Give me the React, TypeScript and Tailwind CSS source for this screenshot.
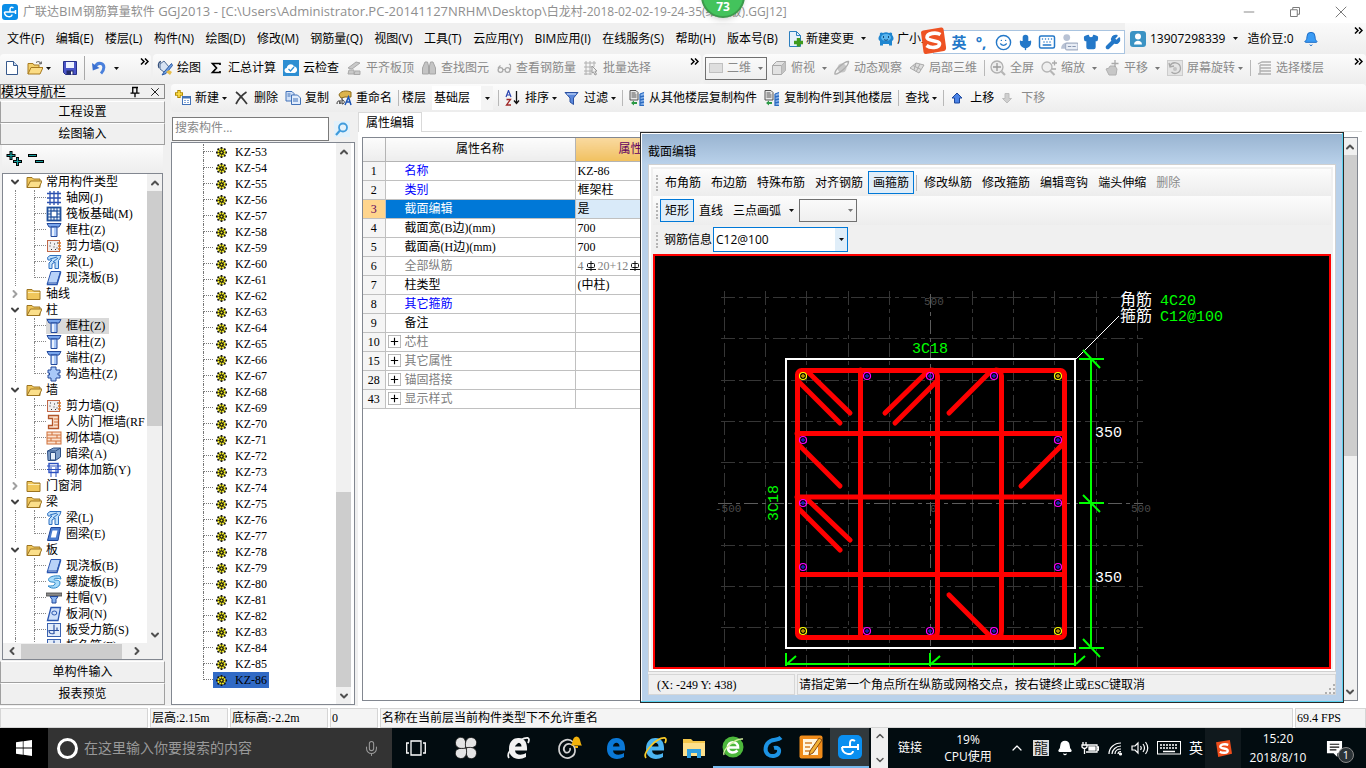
import type { ReactNode } from "react";
import { Bell, Keyboard, Mic, Shirt, Smile, Wrench, ChevronDown, ChevronUp, ChevronLeft, ChevronRight } from "lucide-react";

const UI = "font-['Open_Sans','Noto_Sans_CJK_SC',sans-serif]";
const SONG = "font-['Liberation_Serif','Noto_Sans_CJK_SC',serif]";
const BAR = "bg-linear-to-b from-[#fcfcfc] to-[#ededed]";

interface SvgProps {
  children: ReactNode;
  size?: string;
}

function Svg({ children, size = "size-4" }: SvgProps) {
  return (
    <svg viewBox="0 0 16 16" className={`${size} shrink-0`} fill="none" aria-hidden="true">
      {children}
    </svg>
  );
}

function Caret({ muted = false }: { muted?: boolean }) {
  return (
    <svg viewBox="0 0 5 3" className="h-[3px] w-[5px] shrink-0" aria-hidden="true">
      <path d="M0 0h5L2.5 3z" fill={muted ? "#777" : "#111"} />
    </svg>
  );
}

function More() {
  return (
    <svg viewBox="0 0 9 7" className="mt-1 h-[7px] w-[9px] shrink-0 self-start" fill="none" stroke="#000" strokeWidth="1.5" aria-hidden="true">
      <path d="M1 .5l3 3-3 3M5 .5l3 3-3 3" />
    </svg>
  );
}

function Divider() {
  return <span className="h-4 w-px shrink-0 bg-[#b8b8b8]" />;
}

/* ---------- toolbar icons ---------- */

const icons = {
  logo: (
    <Svg>
      <rect width="16" height="16" rx="3" fill="#0b8ee8" />
      <path d="M11.500 3.800C9.500 2.600 8 3.200 8 5.500V8M2.500 8h11M13.500 6v4M2.500 8c0 5.500 7.500 6 7.500 2.500" stroke="#fff" strokeWidth="1.500" />
    </Svg>
  ),
  file: (
    <Svg>
      <path d="M2.500 1.500h7l4 4v9h-11z" fill="#fff" stroke="#37598c" />
      <path d="M9.500 1.500v4h4" fill="#c9daf2" stroke="#37598c" />
    </Svg>
  ),
  open: (
    <Svg>
      <path d="M1 14V3.500h5l1 1.500h5V8" fill="#f2cf6b" stroke="#a87a1f" />
      <path d="M1 14l3-6.500h12L13 14z" fill="#fbdc84" stroke="#a87a1f" />
      <path d="M9 2.500c2-1.500 4-1 5 1m.3-2v2.300H12" stroke="#444" strokeWidth=".9" />
    </Svg>
  ),
  save: (
    <Svg>
      <path d="M1.500 1.500h13v13h-11l-2-2z" fill="#4a55c8" stroke="#27308a" />
      <path d="M4 2h8v6H4z" fill="#eef2ff" />
      <path d="M4.500 10.500h7v4h-7z" fill="#222b66" />
      <path d="M9 11.500h1.500v3H9z" fill="#fff" />
    </Svg>
  ),
  undo: (
    <Svg>
      <path d="M4 7.500c1-3 3.500-4.500 6-4 4 1 3.600 6.500 0 10" stroke="#4a80dc" strokeWidth="3" />
      <path d="M1 3l.8 7.500L8.500 8z" fill="#3a6fd0" />
    </Svg>
  ),
  paint: (
    <Svg>
      <path d="M3 4l4-3 5 6-5 5-4-3z" fill="#d7e3f3" stroke="#4d6a94" />
      <path d="M4 1.500C1 2 1 6 2 8" stroke="#35517d" strokeWidth="1.300" />
      <path d="M14.500 3.500L7 12l-2 3 4-1.500 6.500-8z" fill="#6f9fe0" stroke="#2d5ca8" />
      <path d="M9 12l4 3 2-3-3-2z" fill="#e8bd4a" />
    </Svg>
  ),
  sum: (
    <Svg>
      <path d="M12 5V3.500H4.500L8.500 8l-4 4.500H12V11" stroke="#000" strokeWidth="1.700" />
    </Svg>
  ),
  cloud: (
    <Svg>
      <rect width="16" height="16" fill="#2d8ed2" />
      <path d="M4 13c-3.500-.5-3-4.800-.3-5C4.200 4 9.500 2.500 11 6.500c4 .2 4 6 .5 6.500z" fill="#fff" />
      <path d="M5.500 9l2 2 3.500-4" stroke="#2d8ed2" strokeWidth="1.300" />
    </Svg>
  ),
  align: (
    <Svg>
      <path d="M2 8l8-6 4 1-8 6zM3 10h5v4H2zM9 11h5v3.500H8z" fill="#c9c9c9" stroke="#a9a9a9" />
    </Svg>
  ),
  binoculars: (
    <Svg>
      <path d="M4 2h2.500l1 4v8H1.500V8zM9.500 2H12l2.500 6v6H8.500V6z" fill="#c4c4c4" stroke="#a5a5a5" />
    </Svg>
  ),
  glasses: (
    <Svg>
      <path d="M4.500 5.500L2 8m11-4l1.500 1v5M7 9.500h2" stroke="#aaa" strokeWidth="1.200" />
      <circle cx="4.500" cy="10" r="2.400" stroke="#aaa" strokeWidth="1.300" />
      <circle cx="11.500" cy="10" r="2.400" stroke="#aaa" strokeWidth="1.300" />
    </Svg>
  ),
  batch: (
    <Svg>
      <path d="M1 3h12M1 7h8M1 11h8M1 14h8M3 1v14M7 1v14M11 1v6" stroke="#b0b0b0" />
      <path d="M9 6l5 5-2 .3 1.500 3-1.500.7-1.500-3L9 13z" fill="#eee" stroke="#999" />
    </Svg>
  ),
  plane: (
    <Svg>
      <rect x="1.500" y="3.500" width="13" height="9" fill="#dedede" stroke="#c0c0c0" />
    </Svg>
  ),
  cube: (
    <Svg>
      <path d="M1.500 5.500l4-4h9v9l-4 4h-9z" fill="#e2e2e2" stroke="#a8a8a8" />
      <path d="M1.500 5.500h9v9m0-9l4-4" stroke="#a8a8a8" />
      <path d="M10.500 5.500l4-4v9l-4 4z" fill="#c4c4c4" />
    </Svg>
  ),
  orbit: (
    <Svg>
      <circle cx="8" cy="8" r="4.500" fill="#c7c7c7" />
      <path d="M1 14c3 1 14-8 13.500-12.500C11 1 0 10 1 14z" stroke="#adadad" strokeWidth="1.400" />
    </Svg>
  ),
  local3d: (
    <Svg>
      <path d="M1 8l6-5 8 2-5 8z" fill="#ddd" stroke="#aaa" />
      <path d="M4 5.500l8 4M7 3l-2 7M11 4l-4 8" stroke="#aaa" />
    </Svg>
  ),
  full: (
    <Svg>
      <circle cx="7" cy="7" r="6" fill="#ededed" stroke="#b0b0b0" strokeWidth="1.300" />
      <path d="M3 7h8M7 3v8" stroke="#999" strokeWidth="1.300" />
      <path d="M11.500 11.500l3.500 3.500" stroke="#b5b5b5" strokeWidth="2.200" />
    </Svg>
  ),
  zoom: (
    <Svg>
      <circle cx="6" cy="7" r="5" fill="#efefef" stroke="#b5b5b5" strokeWidth="1.300" />
      <path d="M9.500 11l4 4" stroke="#b5b5b5" strokeWidth="2.200" />
      <path d="M11 3h5M13.500.5v5M11 9h4" stroke="#aaa" strokeWidth="1.300" />
    </Svg>
  ),
  pan: (
    <Svg>
      <path d="M2 9l3-1 1-2h5l2 3-1 6H5z" fill="#c7c7c7" stroke="#b0b0b0" />
      <path d="M11 0v7M7.500 3.500h7" stroke="#aaa" strokeWidth="1.300" />
    </Svg>
  ),
  rotate: (
    <Svg>
      <rect x=".5" y=".5" width="15" height="15" fill="#e4e4e4" stroke="#ccc" />
      <path d="M3 6c2-5 10-4 10.500 2 0 5-6 7-9 4M2 3l1 4 4-1" stroke="#a8a8a8" strokeWidth="1.300" />
      <circle cx="8" cy="9" r="2" fill="#c2c2c2" />
    </Svg>
  ),
  floors: (
    <Svg>
      <path d="M2 4l4-2h9M4 5h11M4 8h11M4 11h11M2 14h13M4 5v9" stroke="#b0b0b0" strokeWidth="1.300" />
    </Svg>
  ),
  create: (
    <Svg>
      <path d="M4 0v8M0 4h8" stroke="#b38a00" strokeWidth="3.400" />
      <path d="M4 1v6M1 4h6" stroke="#ffe04a" strokeWidth="1.600" />
      <rect x="7.500" y="6.500" width="8" height="8" fill="#fff" stroke="#4272b8" />
      <path d="M7.500 7.500h8" stroke="#4272b8" strokeWidth="2" />
      <path d="M9 10.500h2m1 0h2m-5 2h2m1 0h2" stroke="#86a8d8" />
    </Svg>
  ),
  remove: (
    <Svg>
      <path d="M2 2c4 3 8 8 11 12M12.500 2C8 5 4 10 2 14" stroke="#3a3a3a" strokeWidth="1.700" />
    </Svg>
  ),
  copy: (
    <Svg>
      <path d="M1 1.500h6l2 2V11H1z" fill="#cfe0f8" stroke="#4272b8" />
      <path d="M6.500 5h6l3 3v6.500h-9z" fill="#e2edfc" stroke="#4272b8" />
      <path d="M8 9h5m-5 2h5M2.500 4h3m-3 2h3" stroke="#4272b8" />
    </Svg>
  ),
  rename: (
    <Svg>
      <path d="M3 5c1-4 7-5 12-3v5H9L5 8z" fill="#dcb44c" stroke="#8a6a1a" />
      <path d="M1 14c0-4 3-4 3 0m0-4v4M6 8v6c3 0 3-4 0-4" stroke="#333" />
      <path d="M9 15l3.500-8L15 15m-5-3h4.500" stroke="#1f56b5" strokeWidth="1.500" />
    </Svg>
  ),
  filter: (
    <Svg>
      <path d="M1 2.500h13L9.500 8v6.500L6 12V8z" fill="#5b88dc" stroke="#2b50a0" />
      <path d="M3 4h9" stroke="#d8e5fb" />
    </Svg>
  ),
  sort: (
    <Svg>
      <path d="M1 7l2.500-6.500L6 7M2 5h3" stroke="#2b45b0" strokeWidth="1.200" />
      <path d="M1.500 9.500h4L1.500 15h4.500" stroke="#a02828" strokeWidth="1.300" />
      <path d="M11.500 1v12M9 10.500l2.500 3 2.500-3" stroke="#111" strokeWidth="1.300" />
    </Svg>
  ),
  copyFloor: (
    <Svg>
      <path d="M1 .5h6l2 2V10H1z" fill="#e8e8e8" stroke="#555" />
      <path d="M2.500 3h4m-4 2h5m-5 2h5" stroke="#555" />
      <path d="M11 4l4-1.500v12L11 16z" fill="#8fb8ee" />
      <path d="M11 4l4-1.500M11 7l4-1M11 10l4-1M11 13l4-1M11 15.500h4M11 4v12" stroke="#2d6cc0" strokeWidth="1.300" />
      <path d="M2 13l3-2.500V12h3v2H5v1.500z" fill="#2c9a45" />
    </Svg>
  ),
  up: (
    <Svg>
      <path d="M7 3l5 5H9.500v5h-5V8H2z" fill="#4b83e6" stroke="#1c479c" />
    </Svg>
  ),
  down: (
    <Svg>
      <path d="M6 13L1.500 8.500H4v-5h4v5h2.500z" fill="#cfcfcf" stroke="#bdbdbd" />
    </Svg>
  ),
  change: (
    <Svg>
      <path d="M2.500.5h7l4 4v11h-11z" fill="#e6f1fb" stroke="#2c7fbf" />
      <path d="M9.500.5v4h4" stroke="#2c7fbf" />
      <path d="M11.500 7v8.500M7 11.500h9" stroke="#3f9b1e" strokeWidth="3.400" />
    </Svg>
  ),
  mascot: (
    <Svg>
      <path d="M2 4c-1-3 2-3 3-2 2-1 4-1 6 0 1-1 4-1 3 2 2 2 2 5 0 6v4.500h-3V13H5v1.500H2V10C0 9 0 6 2 4z" fill="#1f86d0" />
      <ellipse cx="8" cy="6.500" rx="5" ry="3.500" fill="#5cb6ee" />
      <path d="M5.500 5v2M10.500 5v2M6 8.500c1 1 3 1 4 0" stroke="#124a7c" />
    </Svg>
  ),
  user: (
    <Svg>
      <rect width="16" height="16" rx="3" fill="#3b93c4" />
      <path d="M4 13.500c0-5 8-5 8 0z" fill="#fff" />
      <circle cx="8" cy="5.500" r="3" fill="#fff" />
    </Svg>
  ),
};

/* ---------- tree icons ---------- */

const treeIcons: Record<string, ReactNode> = {
  axis: (
    <Svg>
      <path d="M1 3.500h14M1 8h14M1 12.500h14M4 1v14M8 1v14M12 1v14" stroke="#2b50b0" strokeWidth="1.300" />
    </Svg>
  ),
  raft: (
    <Svg>
      <rect x="1.500" y="1.500" width="13" height="13" fill="#e7f0fb" stroke="#1f4f9a" strokeWidth="1.800" />
      <rect x="5" y="5" width="6" height="6" fill="#fff" stroke="#1f4f9a" strokeWidth="1.300" />
      <path d="M5 2v3M8 2v3M11 2v3M5 11v3M8 11v3M11 11v3M2 5h3M2 8h3M2 11h3M11 5h3M11 8h3M11 11h3" stroke="#1f4f9a" />
    </Svg>
  ),
  column: (
    <Svg>
      <path d="M1 1.500h14L13 5H3z" fill="#79a6ec" stroke="#23489a" />
      <path d="M5 5h6v9.500H5z" fill="#a9c8f8" stroke="#23489a" />
      <path d="M7 6v8" stroke="#fff" strokeWidth="1.500" />
    </Svg>
  ),
  wall: (
    <Svg>
      <rect x="1.500" y="2.500" width="12" height="11" fill="#f1eeee" stroke="#c0694a" />
      <path d="M4 5h1m3 1h1m2-1h1M3.500 8h1m3 1h1m2 1h1M5 11.500h1m3 0h1" stroke="#333" />
      <path d="M12 5h3m-3 3h3m-3 3h3" stroke="#e07b28" strokeWidth="1.500" />
    </Svg>
  ),
  beam: (
    <Svg>
      <path d="M1.500 3.500L4 1.500h11l-1 3-1.500 2v8H9V8l-3 2v4.500H3V9l3-3H2z" fill="#bfe0fb" stroke="#2c6fc0" />
      <path d="M4 5l7-2M7 8l5-4" stroke="#2c6fc0" />
    </Svg>
  ),
  slab: (
    <Svg>
      <path d="M5 1.500h9.500L11 13H1.500z" fill="#b8d2f8" stroke="#2b57b0" />
      <path d="M1.500 13v1.500H11L14.500 3V1.500" stroke="#2b57b0" strokeWidth="1.400" />
    </Svg>
  ),
  structural: (
    <Svg>
      <path d="M5 1h5v3h4v3h-2v2h2v3h-4v3H5v-3H2V9h1.500V7H2V4h3z" fill="#a9c8f8" stroke="#23489a" />
    </Svg>
  ),
  defense: (
    <Svg>
      <path d="M2.500 1.500h10v13h-10v-3h4v-7h-4z" fill="#fbe2cf" stroke="#b3562a" strokeWidth="1.300" />
      <path d="M8 5h4M8 8h4M8 11h4" stroke="#d0703a" />
    </Svg>
  ),
  brick: (
    <Svg>
      <rect x="1" y="2" width="14" height="12" fill="#fbe2cf" stroke="#d0703a" />
      <path d="M1 5h14M1 8h14M1 11h14M6 2v3M11 5v3M5 8v3M10 11v3" stroke="#d0703a" />
    </Svg>
  ),
  hidden: (
    <Svg>
      <path d="M1.500 5l6-3h7v9l-5 3.500H2z" fill="#7f9fca" stroke="#2d4f84" />
      <path d="M4.500 6.500h5V14h-5z" fill="#e3edf9" stroke="#2d4f84" />
      <path d="M1.500 5h8l5-3" stroke="#2d4f84" />
    </Svg>
  ),
  masonry: (
    <Svg>
      <rect x="3" y="1.500" width="9" height="9" stroke="#2b50c0" strokeWidth="1.400" />
      <path d="M1 4h14M1 7.500h14M5 5v10M10 5v10" stroke="#2b50c0" />
    </Svg>
  ),
  ring: (
    <Svg>
      <path d="M5 1.500h9.500L12 14.500H1.500z" fill="#4a7cd0" stroke="#1f469a" />
      <path d="M6.500 4.500h5L9.800 11.500H4.800z" fill="#fff" />
    </Svg>
  ),
  spiral: (
    <Svg>
      <path d="M14 2C6 1 1 4 3 7c2 2 7 0 6 3-.5 2-4 2-7 2 4 4 12 2 12-3 0-4-5-2-6-3.500C8 4 11 4 15 5z" fill="#a8dcfb" stroke="#2c86c8" />
    </Svg>
  ),
  cap: (
    <Svg>
      <rect x="0" y="3" width="16" height="3" fill="#8a8a8a" stroke="#444" strokeWidth=".8" />
      <path d="M4 6.500h8L10 9.500V13H6V9.500z" fill="#8ab4f0" stroke="#23489a" />
    </Svg>
  ),
  hole: (
    <Svg>
      <path d="M5 1.500h9.500L12 14.500H1.500z" fill="#cfe0fa" stroke="#2b57b0" strokeWidth="1.300" />
      <ellipse cx="8.300" cy="7" rx="2.500" ry="2" stroke="#2b57b0" />
    </Svg>
  ),
  rebar: (
    <Svg>
      <rect x="1.500" y="1.500" width="13" height="13" fill="#e2ecfa" stroke="#3a62b0" />
      <path d="M8 2.500v9c-4 1-5-1-5-3h10M11 8V5.500" stroke="#2b50a0" strokeWidth="1.200" />
    </Svg>
  ),
};

function Folder({ open }: { open: boolean }) {
  return (
    <Svg>
      <path d="M1 13.500v-10h5l1.500 1.500H14v8.500z" fill="#f0c75c" stroke="#9c7420" />
      {open ? (
        <path d="M1 13.500L4.500 7H16l-3 6.500z" fill="#fbdf8a" stroke="#9c7420" />
      ) : (
        <path d="M2 6.500h11.500" stroke="#fdeeb8" />
      )}
    </Svg>
  );
}

/* ---------- shared pieces ---------- */

interface ToolProps {
  icon?: ReactNode;
  label?: string;
  muted?: boolean;
  caret?: "near" | "far";
}

function Tool({ icon, label, muted, caret }: ToolProps) {
  return (
    <button
      type="button"
      aria-label={label ?? "工具"}
      className={`flex shrink-0 items-center whitespace-nowrap ${muted ? "text-[#8a8a8a]" : "text-black"}`}
    >
      {icon}
      {label && <span className={icon ? "ml-1" : ""}>{label}</span>}
      {caret && (
        <span className={caret === "far" ? "ml-[7px]" : "ml-[3px]"}>
          <Caret muted={muted} />
        </span>
      )}
    </button>
  );
}

function VScroll({ thumb }: { thumb: string }) {
  return (
    <div className="flex w-[15px] shrink-0 flex-col bg-[#f0f0f0]">
      <button type="button" aria-label="向上" className="flex h-[17px] items-center justify-center">
        <ChevronUp className="size-3 text-[#505050]" strokeWidth={4} />
      </button>
      <div className="flex min-h-0 flex-1 flex-col">
        <div className={`bg-[#cdcdcd] ${thumb}`} />
      </div>
      <button type="button" aria-label="向下" className="flex h-[17px] items-center justify-center">
        <ChevronDown className="size-3 text-[#505050]" strokeWidth={4} />
      </button>
    </div>
  );
}

/* ---------- title and menus ---------- */

function TitleBar() {
  return (
    <header className="flex h-[23px] shrink-0 items-center bg-white pl-[2px] text-[#8f8f8f]">
      {icons.logo}
      <h1 className="ml-[5px] flex-1 text-[13px] leading-[23px] whitespace-nowrap">
        <span className="text-xs">广联达</span>BIM<span className="text-xs">钢筋算量软件</span>
        {" GGJ2013 - [C:\\Users\\Administrator.PC-20141127NRHM\\Desktop\\"}
        <span className="text-xs">白龙村-2018-02-02-19-24-35(结算版).GGJ12]</span>
      </h1>
      <div className="flex gap-[34px] pr-[19px]">
        <button type="button" aria-label="最小化">
          <Svg size="size-3"><path d="M1 8h14" stroke="#888" strokeWidth="1.300" /></Svg>
        </button>
        <button type="button" aria-label="还原">
          <Svg size="size-3"><path d="M2 5h9v9H2zM5 5V2h9v9h-3" stroke="#777" strokeWidth="1.300" /></Svg>
        </button>
        <button type="button" aria-label="关闭">
          <Svg size="size-3"><path d="M1 1l14 14M15 1L1 15" stroke="#777" strokeWidth="1.300" /></Svg>
        </button>
      </div>
    </header>
  );
}

const menus = [
  "文件(F)", "编辑(E)", "楼层(L)", "构件(N)", "绘图(D)", "修改(M)", "钢筋量(Q)", "视图(V)",
  "工具(T)", "云应用(Y)", "BIM应用(I)", "在线服务(S)", "帮助(H)", "版本号(B)",
];

const imeTools: ReactNode[] = [
  <span className="text-[15px] font-bold">英</span>,
  <span className="text-[15px] font-bold">°,</span>,
  <Smile className="size-[17px]" />,
  <Mic className="size-[17px] fill-current" />,
  <Keyboard className="size-[18px]" />,
  <svg viewBox="0 0 16 16" className="size-[18px]" aria-hidden="true">
    <circle cx="6" cy="4" r="3" fill="#b8c2d4" />
    <path d="M1 14c0-7 10-7 10 0z" fill="#b8c2d4" />
    <rect x="5" y="9" width="11" height="6" rx="1" fill="#e8edf5" stroke="#a2aec4" />
    <path d="M7 12h3m1 0h3" stroke="#8896b0" />
  </svg>,
  <Shirt className="size-[16px] fill-current" />,
  <Wrench className="size-[16px] fill-current" />,
];

function MenuBar() {
  return (
    <nav className="relative flex h-[31px] shrink-0 items-center bg-[#f0f0f0] pl-[7px]">
      <div className="flex min-w-0 flex-1 items-center overflow-hidden whitespace-nowrap">
        <div className="flex w-[771px] shrink-0 justify-between">
          {menus.map((m) => (
            <button type="button" key={m}>{m}</button>
          ))}
        </div>
        <button type="button" className="ml-[9px] flex items-center gap-[3px]">
          {icons.change}新建变更
          <span className="ml-1"><Caret /></span>
        </button>
        <button type="button" className="ml-3 flex items-center gap-[3px]">{icons.mascot}广小二</button>
      </div>
      <div className="flex h-full w-[241px] items-center bg-linear-to-b from-[#fafafa] to-[#eeeeee] pl-[5px]">
        {icons.user}
        <button type="button" className="ml-1 flex items-center gap-2">13907298339<Caret /></button>
        <span className="ml-[9px]">造价豆:0</span>
        <Bell className="mr-auto ml-[9px] size-4 fill-[#3a9bf4] text-[#1f6fc8]" strokeWidth={1.5} />
        <span className="flex h-full pr-[3px]"><More /></span>
      </div>
      <div className="absolute top-[7px] right-[241px] flex h-[24px] w-[192px] items-center border border-[#a9c4e0] bg-white pl-[14px] text-[#2478c8]">
        <svg viewBox="0 0 28 28" className="absolute -top-[4px] -left-[15px] size-7" aria-hidden="true">
          <path d="M2 5.500Q2 4 4 3.500L22 .5Q24 0 24.500 2L27 20Q27.500 23 25 24L7 27Q5 27.500 4.500 25z" fill="#ee5223" />
          <path d="M21.500 7.500C17 5 8 6 8 10.500c0 4 13 2.500 12.500 6.500-.5 4-9 4.500-13 1.500" fill="none" stroke="#fff" strokeWidth="3.600" />
        </svg>
        {imeTools.map((t, i) => (
          <span key={i} className="flex w-[22px] shrink-0 items-center justify-center">{t}</span>
        ))}
      </div>
    </nav>
  );
}

function MainToolbar() {
  return (
    <div className="flex h-[30px] shrink-0 gap-[2px] overflow-hidden bg-[#f0f0f0]">
      <div className={`flex w-[151px] shrink-0 items-center rounded-sm pb-[2px] pl-1 ${BAR}`}>
        <Tool icon={icons.file} />
        <span className="ml-[7px]"><Tool icon={icons.open} caret="near" /></span>
        <span className="ml-[11px]"><Tool icon={icons.save} /></span>
        <span className="mx-[6px] h-6 w-px bg-[#a8a8a8]" />
        <Tool icon={icons.undo} />
        <span className="ml-[7px]"><Caret /></span>
        <span className="ml-auto flex h-full pr-[2px]"><More /></span>
      </div>
      <div className={`flex w-[548px] shrink-0 items-center gap-[7px] rounded-sm pb-[2px] pl-1 ${BAR}`}>
        <Tool icon={icons.paint} label="绘图" />
        <Tool icon={icons.sum} label="汇总计算" />
        <Tool icon={icons.cloud} label="云检查" />
        <Tool icon={icons.align} label="平齐板顶" muted />
        <Tool icon={icons.binoculars} label="查找图元" muted />
        <Tool icon={icons.glasses} label="查看钢筋量" muted />
        <Tool icon={icons.batch} label="批量选择" muted />
        <span className="ml-auto flex h-full pr-[2px]"><More /></span>
      </div>
      <div className={`flex min-w-0 flex-1 items-center gap-[7px] rounded-sm pb-[2px] pl-[2px] ${BAR}`}>
        <button type="button" className="-mr-[3px] flex h-[23px] w-[62px] shrink-0 items-center gap-[3px] border border-[#707070] pl-[2px] text-[#8a8a8a]">
          {icons.plane}二维
          <span className="ml-1"><Caret muted /></span>
        </button>
        <Tool icon={icons.cube} label="俯视" muted caret="far" />
        <Tool icon={icons.orbit} label="动态观察" muted />
        <Tool icon={icons.local3d} label="局部三维" muted />
        <Divider />
        <span className="-ml-[2px] flex"><Tool icon={icons.full} label="全屏" muted /></span>
        <Tool icon={icons.zoom} label="缩放" muted caret="far" />
        <Tool icon={icons.pan} label="平移" muted caret="far" />
        <Tool icon={icons.rotate} label="屏幕旋转" muted caret="near" />
        <Divider />
        <span className="-ml-[2px] flex"><Tool icon={icons.floors} label="选择楼层" muted /></span>
        <span className="ml-auto flex h-full pr-[3px]"><More /></span>
      </div>
    </div>
  );
}

function ComponentToolbar() {
  return (
    <div className={`flex h-7 shrink-0 items-center gap-[7px] overflow-hidden rounded-sm pl-1 ${BAR}`}>
      <Tool icon={icons.create} label="新建" caret="near" />
      <Tool icon={icons.remove} label="删除" />
      <Tool icon={icons.copy} label="复制" />
      <Tool icon={icons.rename} label="重命名" />
      <div className="-mx-px flex shrink-0 items-center gap-[3px]">
        <Divider />
        <label htmlFor="floor">楼层</label>
        <span className="relative ml-[3px]">
          <select id="floor" className="block h-6 w-[61px] appearance-none bg-white pl-[2px]">
            <option>基础层</option>
          </select>
          <span className="pointer-events-none absolute top-0 right-0 flex h-full w-3 items-center justify-center bg-[#f4f4f4]">
            <Caret />
          </span>
        </span>
      </div>
      <span className="-mx-px flex"><Divider /></span>
      <Tool icon={icons.sort} label="排序" caret="near" />
      <Tool icon={icons.filter} label="过滤" caret="near" />
      <span className="-mx-px flex"><Divider /></span>
      <Tool icon={icons.copyFloor} label="从其他楼层复制构件" />
      <Tool icon={icons.copyFloor} label="复制构件到其他楼层" />
      <span className="-mx-px flex"><Divider /></span>
      <Tool label="查找" caret="near" />
      <span className="-mx-px flex"><Divider /></span>
      <Tool icon={icons.up} label="上移" />
      <Tool icon={icons.down} label="下移" muted />
    </div>
  );
}

/* ---------- module navigation ---------- */

interface Group {
  name: string;
  open: boolean;
  items: [icon: string, label: string][];
}

const groups: Group[] = [
  {
    name: "常用构件类型",
    open: true,
    items: [["axis", "轴网(J)"], ["raft", "筏板基础(M)"], ["column", "框柱(Z)"], ["wall", "剪力墙(Q)"], ["beam", "梁(L)"], ["slab", "现浇板(B)"]],
  },
  { name: "轴线", open: false, items: [] },
  {
    name: "柱",
    open: true,
    items: [["column", "框柱(Z)"], ["column", "暗柱(Z)"], ["column", "端柱(Z)"], ["structural", "构造柱(Z)"]],
  },
  {
    name: "墙",
    open: true,
    items: [["wall", "剪力墙(Q)"], ["defense", "人防门框墙(RF"], ["brick", "砌体墙(Q)"], ["hidden", "暗梁(A)"], ["masonry", "砌体加筋(Y)"]],
  },
  { name: "门窗洞", open: false, items: [] },
  { name: "梁", open: true, items: [["beam", "梁(L)"], ["ring", "圈梁(E)"]] },
  {
    name: "板",
    open: true,
    items: [["slab", "现浇板(B)"], ["spiral", "螺旋板(B)"], ["cap", "柱帽(V)"], ["hole", "板洞(N)"], ["rebar", "板受力筋(S)"], ["rebar", "板负筋(F)"]],
  },
];

function TreeGroup({ group }: { group: Group }) {
  return (
    <li>
      <div className="flex h-4 items-center">
        <span className="flex w-[23px] justify-center">
          {group.open ? (
            <ChevronDown className="size-3 text-[#404040]" strokeWidth={4} />
          ) : (
            <ChevronRight className="size-3 text-[#a0a0a0]" strokeWidth={4} />
          )}
        </span>
        <Folder open={group.open} />
        <span className="ml-1">{group.name}</span>
      </div>
      <ul>
        {group.items.map(([icon, label], i) => (
          <li key={label} className="flex h-4 items-center">
            <span className="ml-3 h-full w-[19px] shrink-0 border-l border-dotted border-[#888]" />
            <span className="flex h-full w-3 shrink-0 flex-col">
              <span className="h-2 border-b border-l border-dotted border-[#888]" />
              {i < group.items.length - 1 && <span className="h-2 border-l border-dotted border-[#888]" />}
            </span>
            <span className={`flex h-4 items-center gap-1 pr-1 ${group.name === "柱" && i === 0 ? "bg-[#d9d9d9]" : ""}`}>
              {treeIcons[icon]}
              {label}
            </span>
          </li>
        ))}
      </ul>
    </li>
  );
}

function NavButton({ children }: { children: ReactNode }) {
  return (
    <button type="button" className="h-[22px] shrink-0 border border-[#a0a0a0] border-t-white bg-[#f0f0f0] leading-5">
      {children}
    </button>
  );
}

function ModuleNav() {
  return (
    <aside className={`flex w-[165px] shrink-0 flex-col ${SONG}`}>
      <div className="flex h-[15px] shrink-0 items-center border border-[#8a8a8a] pr-1 leading-[13px]">
        <h2 className="flex-1 text-[13px] leading-[13px]">模块导航栏</h2>
        <button type="button" aria-label="固定" className="mr-[9px]">
          <Svg size="size-3"><path d="M4 2h8M5 2v7M10.500 2v7M2 9.500h12M8 10v5" stroke="#000" strokeWidth="1.800" /></Svg>
        </button>
        <button type="button" aria-label="关闭导航栏">
          <Svg size="size-[10px]"><path d="M2 2l12 12M14 2L2 14" stroke="#222" strokeWidth="1.600" /></Svg>
        </button>
      </div>
      <div className="mt-[2px] flex shrink-0 flex-col">
        <NavButton>工程设置</NavButton>
        <NavButton>绘图输入</NavButton>
      </div>
      <div className={`mx-[2px] flex h-7 shrink-0 items-center gap-[6px] pl-1 ${BAR}`}>
        <button type="button" aria-label="全部展开">
          <Svg><path d="M5 0v9M.5 4.500h9M11.500 6v9M7 10.500h9" stroke="#000" strokeWidth="3" /><path d="M5 1v7M1.500 4.500h7M11.500 7v7M8 10.500h7" stroke="#18a0a0" strokeWidth="1.200" /></Svg>
        </button>
        <button type="button" aria-label="全部折叠">
          <Svg><path d="M0 4.500h9M7 10.500h9" stroke="#000" strokeWidth="3" /><path d="M1 4.500h7M8 10.500h7" stroke="#18a0a0" strokeWidth="1.200" /></Svg>
        </button>
      </div>
      <div className="mx-[2px] flex min-h-0 flex-1 flex-col border border-[#828790] bg-white">
        <div className="flex min-h-0 flex-1">
          <ul className="min-w-0 flex-1 overflow-hidden leading-4 whitespace-nowrap">
            {groups.map((g) => (
              <TreeGroup key={g.name} group={g} />
            ))}
          </ul>
          <VScroll thumb="h-[54%]" />
        </div>
        <div className="flex h-4 shrink-0 items-center bg-[#f0f0f0] pr-4">
          <button type="button" aria-label="向左" className="px-[3px]">
            <ChevronLeft className="size-3 text-[#505050]" strokeWidth={4} />
          </button>
          <span className="h-[15px] flex-1">
            <span className="block h-full w-[94%] bg-[#cdcdcd]" />
          </span>
          <button type="button" aria-label="向右" className="px-[3px]">
            <ChevronRight className="size-3 text-[#505050]" strokeWidth={4} />
          </button>
        </div>
      </div>
      <div className="mt-px flex shrink-0 flex-col pb-px">
        <NavButton>单构件输入</NavButton>
        <NavButton>报表预览</NavButton>
      </div>
    </aside>
  );
}

/* ---------- component list ---------- */

const members = Array.from({ length: 34 }, (_, i) => `KZ-${i + 53}`);

function GearIcon() {
  return (
    <svg viewBox="0 0 11 11" className="size-[11px] shrink-0" fill="none" aria-hidden="true">
      <path d="M5.500 0v11M0 5.500h11M1.600 1.600l7.800 7.800M9.400 1.600l-7.800 7.800" stroke="#111" strokeWidth="1.800" />
      <circle cx="5.500" cy="5.500" r="4.200" fill="#111" />
      <circle cx="5.500" cy="5.500" r="3.200" stroke="#f4ee20" strokeWidth="1.800" strokeDasharray="1.900 .6" />
      <circle cx="5.500" cy="5.500" r="1" fill="#f4ee20" />
    </svg>
  );
}

function MemberList() {
  return (
    <section className="flex w-[184px] shrink-0 flex-col pb-px">
      <div className="flex h-[30px] shrink-0 items-center pt-1">
        <input
          aria-label="搜索构件"
          placeholder="搜索构件..."
          className="ml-px h-6 w-[157px] border border-[#7a7a7a] bg-white px-[2px] pb-[3px] placeholder:text-[#888]"
        />
        <button type="button" aria-label="搜索" className="flex flex-1 items-center justify-center">
          <Svg>
            <rect width="16" height="16" fill="#e2f1fb" />
            <circle cx="9" cy="6.500" r="4" stroke="#3f9bdc" strokeWidth="1.800" />
            <path d="M6 9.500L2 14" stroke="#3f9bdc" strokeWidth="2.200" />
          </Svg>
        </button>
      </div>
      <div className={`flex min-h-0 flex-1 border border-[#828790] bg-white ${SONG}`}>
        <ul className="min-w-0 flex-1 overflow-hidden pt-px pl-[31px]">
          {members.map((m, i) => (
            <li key={m} className="flex h-4 items-center">
              <span className="flex h-full w-[10px] shrink-0 flex-col">
                <span className="h-2 border-b border-l border-dotted border-[#777]" />
                {i < members.length - 1 && <span className="h-2 border-l border-dotted border-[#777]" />}
              </span>
              <span className={`flex h-4 items-center gap-2 pr-[2px] pl-[3px] leading-4 ${m === "KZ-86" ? "bg-[#316ac5]" : ""}`}>
                <GearIcon />
                {m}
              </span>
            </li>
          ))}
        </ul>
        <div className="flex pr-[3px]"><VScroll thumb="mt-auto h-[37%]" /></div>
      </div>
    </section>
  );
}

/* ---------- property table ---------- */

interface PropertyRow {
  no: number;
  name: string;
  value?: ReactNode;
  tone?: string;
  nested?: boolean;
}

const rows: PropertyRow[] = [
  { no: 1, name: "名称", value: "KZ-86", tone: "text-[#0000ff]" },
  { no: 2, name: "类别", value: "框架柱", tone: "text-[#0000ff]" },
  { no: 3, name: "截面编辑", value: "是", tone: "text-white" },
  { no: 4, name: "截面宽(B边)(mm)", value: "700" },
  { no: 5, name: "截面高(H边)(mm)", value: "700" },
  {
    no: 6,
    name: "全部纵筋",
    value: <span className="flex items-center gap-[2px] text-[#808080]">4<RebarMark />20+12<RebarMark />18</span>,
    tone: "text-[#808080]",
  },
  { no: 7, name: "柱类型", value: "(中柱)" },
  { no: 8, name: "其它箍筋", tone: "text-[#0000ff]" },
  { no: 9, name: "备注" },
  { no: 10, name: "芯柱", tone: "text-[#808080]", nested: true },
  { no: 15, name: "其它属性", tone: "text-[#808080]", nested: true },
  { no: 28, name: "锚固搭接", tone: "text-[#808080]", nested: true },
  { no: 43, name: "显示样式", tone: "text-[#808080]", nested: true },
];

function RebarMark() {
  return (
    <svg viewBox="0 0 10 10" className="size-[10px]" fill="none" stroke="#111" aria-hidden="true">
      <path d="M5 0v10M0 8.500h10" />
      <rect x="1.500" y="2.500" width="7" height="4" rx="1" />
    </svg>
  );
}

function PropertyTable() {
  return (
    <table className={`w-full table-fixed border-collapse self-start ${SONG}`}>
      <colgroup>
        <col className="w-[22px]" />
        <col className="w-[190px]" />
        <col />
      </colgroup>
      <thead>
        <tr className="h-[23px]">
          <th className={`border-r border-b border-[#b4b4b4] ${BAR}`} />
          <th className={`border-r border-b border-[#b4b4b4] font-normal ${BAR}`}>属性名称</th>
          <th className="border-b border-[#b4b4b4] bg-linear-to-b from-[#f9d99f] to-[#f1c15f] pl-[43px] text-left font-normal text-[#600060]">
            属性值
          </th>
        </tr>
      </thead>
      <tbody>
        {rows.map((r) => {
          const active = r.no === 3;
          return (
            <tr key={r.no} className="h-[19px] leading-[18px]">
              <td className={`border-r border-b border-[#c0c0c0] p-0 text-center ${active ? "bg-[#ffd58d] text-[#600060]" : "bg-[#f5f5f5]"}`}>
                {r.no}
              </td>
              <td className={`border-r border-b border-[#c0c0c0] p-0 ${active ? "bg-[#0078d7]" : "bg-white"}`}>
                <span className="flex items-center">
                  <span className="w-[19px] shrink-0 pl-[2px]">
                    {r.nested && (
                      <button type="button" aria-label={`展开${r.name}`} className="block">
                        <Svg size="size-[13px]">
                          <rect x=".5" y=".5" width="15" height="15" fill="#fff" stroke="#aaa" />
                          <path d="M3.500 8h9M8 3.500v9" stroke="#000" strokeWidth="1.400" />
                        </Svg>
                      </button>
                    )}
                  </span>
                  <span className={r.tone ?? "text-black"}>{r.name}</span>
                </span>
              </td>
              <td className={`border-b border-[#c0c0c0] p-0 pl-[2px] ${active ? "bg-[#d9eaf9]" : "bg-white"}`}>{r.value}</td>
            </tr>
          );
        })}
      </tbody>
    </table>
  );
}

/* ---------- section editor ---------- */

const gridX = [724, 765, 806, 848, 889, 972, 1013, 1054, 1096, 1137];
const gridY = [297, 338, 380, 421, 462, 545, 586, 627];
const hooks = [
  [808, 372, 850, 413], [798, 381, 840, 423], [927, 372, 885, 413], [937, 381, 895, 423], [990, 372, 949, 413],
  [798, 444, 840, 486], [1063, 444, 1021, 486], [808, 500, 850, 540], [798, 508, 840, 550], [949, 595, 990, 636],
];
const cornerBars = [[803, 376], [1058, 376], [803, 631], [1058, 631]];
const sideBars = [
  [867, 376], [930, 376], [994, 376], [867, 631], [930, 631], [994, 631],
  [803, 440], [803, 503], [803, 567], [1058, 440], [1058, 503], [1058, 567],
];

function Bar({ x, y, color, core }: { x: number; y: number; color: string; core: string }) {
  return (
    <g>
      <circle cx={x} cy={y} r="3.500" stroke={color} strokeWidth="1.200" />
      <path d={`M${x - 2} ${y}h4M${x} ${y - 2}v4`} stroke={core} strokeWidth="1.400" />
    </g>
  );
}

function SectionDrawing() {
  return (
    <svg
      viewBox="655 256 675 411"
      preserveAspectRatio="xMinYMin slice"
      className="block size-full bg-black font-['Liberation_Mono','Noto_Sans_CJK_SC',monospace]"
      fill="none"
      role="img"
      aria-label="柱截面配筋图"
    >
      <g stroke="#363636" strokeDasharray="14 4 4 4" shapeRendering="crispEdges">
        {gridX.map((x) => <path key={x} d={`M${x}.5 291V667`} />)}
        {gridY.map((y) => <path key={y} d={`M721 ${y}.5H1143`} />)}
        <path d="M930.500 294V667M718 503.500H1143" stroke="#5c5c5c" />
      </g>
      <g fill="#4a4a4a" fontSize="11">
        <text x="924" y="305">500</text>
        <text x="715" y="512">-500</text>
        <text x="930" y="512">0</text>
        <text x="1131" y="512">500</text>
      </g>
      <rect x="786" y="359" width="289" height="289" stroke="#fff" strokeWidth="2" />
      <path d="M1119 316l-43 43" stroke="#fff" />
      <g stroke="#f00" strokeWidth="5" strokeLinecap="round">
        <rect x="797.500" y="370.500" width="267" height="267" rx="4" />
        <path d="M860.500 370v267M937.500 376v255q0 6-5 6M931 370q6 0 6.500 6M1001.500 376v255q0 6-5 6M996 370q5 0 5.500 6" />
        <path d="M797 433.500h267M797 497h267M800 574.500h262" />
        {hooks.map(([x1, y1, x2, y2]) => (
          <line key={`${x1}-${y1}`} x1={x1} y1={y1} x2={x2} y2={y2} />
        ))}
      </g>
      {cornerBars.map(([x, y]) => <Bar key={`${x}-${y}`} x={x} y={y} color="#ff0" core="#c8a000" />)}
      {sideBars.map(([x, y]) => <Bar key={`${x}-${y}`} x={x} y={y} color="#f0f" core="#2020c0" />)}
      <g stroke="#0f0" strokeWidth="2">
        <path d="M1091 359v289M1079 359h25M1079 503h25M1079 648h25" />
        <path d="M1083 350l17 18M1083 495l17 17M1083 639l17 18" />
        <path d="M786 664h289M786 653v13M930 653v13M1075 653v13M787 664l9-8M931 664l9-8M1076 664l9-8" />
      </g>
      <g fill="#0f0" fontSize="15">
        <text x="912" y="353">3C18</text>
        <text x="0" y="0" transform="translate(778 521) rotate(-90)">3C18</text>
        <text x="1160" y="305">4C20</text>
        <text x="1160" y="321">C12@100</text>
      </g>
      <g fill="#fff" fontSize="16">
        <text x="1120" y="305">角筋</text>
        <text x="1120" y="321">箍筋</text>
        <text x="1095" y="437" fontSize="15">350</text>
        <text x="1095" y="582" fontSize="15">350</text>
      </g>
    </svg>
  );
}

function Grip() {
  return <span className="h-4 w-[2px] shrink-0 border-l-2 border-dotted border-[#b4b4b4]" />;
}

function Dialog() {
  return (
    <section
      role="dialog"
      aria-labelledby="section-title"
      className="absolute top-5 right-[22px] bottom-[3px] left-[282px] flex flex-col border border-[#2a2a2a] bg-[#b9d1ea] px-[7px] pb-[7px] shadow-[inset_-1px_-1px_0_#5ad2f0,inset_1px_1px_0_#fff]"
    >
      <h2 id="section-title" className="-mx-[6px] mt-px h-[30px] shrink-0 bg-linear-to-b from-[#99b4d1] to-[#b9d1ea] pt-[5px] pl-[6px] leading-[26px]">
        截面编辑
      </h2>
      <div className="flex min-h-0 flex-1 flex-col border border-[#d0d0d0] bg-[#f0f0f0]">
        <div className="flex min-h-0 flex-1 flex-col border-2 border-white px-[2px] pt-[2px]">
          <div className={`flex h-[27px] shrink-0 items-center gap-[10px] pl-[3px] whitespace-nowrap ${BAR}`}>
            <span className="-mr-[3px] flex"><Grip /></span>
            <button type="button">布角筋</button>
            <button type="button">布边筋</button>
            <button type="button">特殊布筋</button>
            <button type="button">对齐钢筋</button>
            <button type="button" aria-pressed="true" className="-mx-[5px] h-[23px] border border-[#0078d7] bg-[#e0eef9] px-1">画箍筋</button>
            <span className="-mx-[3px] flex"><Divider /></span>
            <button type="button">修改纵筋</button>
            <button type="button">修改箍筋</button>
            <button type="button">编辑弯钩</button>
            <button type="button">端头伸缩</button>
            <button type="button" className="text-[#8a8a8a]">删除</button>
          </div>
          <div className={`flex h-[29px] shrink-0 items-center pl-[3px] whitespace-nowrap ${BAR}`}>
            <Grip />
            <button type="button" aria-pressed="true" className="ml-[2px] h-[23px] border border-[#0078d7] bg-[#e0eef9] px-1">矩形</button>
            <button type="button" className="ml-[5px]">直线</button>
            <button type="button" className="ml-[10px] flex items-center gap-2">三点画弧<Caret /></button>
            <span className="relative ml-[5px]">
              <select aria-label="弧线方式" disabled className="block h-[23px] w-[58px] appearance-none border border-[#707070]" />
              <span className="pointer-events-none absolute top-[10px] right-1 flex"><Caret muted /></span>
            </span>
          </div>
          <div className="flex h-[29px] shrink-0 items-center pl-[3px] whitespace-nowrap">
            <Grip />
            <label htmlFor="rebar" className="ml-[6px]">钢筋信息</label>
            <span className="relative ml-px">
              <select id="rebar" className="block h-[25px] w-[135px] appearance-none border border-[#0078d7] bg-white pl-[2px]">
                <option>C12@100</option>
              </select>
              <span className="pointer-events-none absolute top-px right-px flex h-[23px] w-3 items-center justify-center bg-[#e0eef9]">
                <Caret />
              </span>
            </span>
          </div>
          <div className="min-h-0 flex-1 border-2 border-[#f00]">
            <SectionDrawing />
          </div>
        </div>
      </div>
      <div className={`flex h-[23px] shrink-0 gap-[2px] bg-[#f0f0f0] pt-[2px] ${SONG}`}>
        <output className="w-[147px] border border-[#d6d6d6] pl-2 leading-5">(X: -249 Y: 438)</output>
        <p className="relative flex-1 border border-[#d6d6d6] pl-px leading-5">
          请指定第一个角点所在纵筋或网格交点，按右键终止或ESC键取消
          <svg viewBox="0 0 10 10" className="absolute right-0 bottom-0 size-[10px]" fill="#b0b0b0" aria-hidden="true">
            <path d="M8 0h2v2H8zM8 4h2v2H8zM8 8h2v2H8zM4 4h2v2H4zM4 8h2v2H4zM0 8h2v2H0z" />
          </svg>
        </p>
      </div>
    </section>
  );
}

function PropertyPanel() {
  return (
    <section className="relative ml-[3px] flex min-w-0 flex-1 flex-col bg-white pr-1 pb-px">
      <div role="tablist" className="flex h-5 shrink-0 border-b border-[#d9d9d9]">
        <button type="button" role="tab" aria-selected="true" className="-mb-px h-5 border-x border-t border-[#d9d9d9] bg-white px-[7px]">
          属性编辑
        </button>
      </div>
      <div className="mx-1 mt-[5px] mb-1 flex min-h-0 flex-1 border border-[#828790]">
        <PropertyTable />
        <VScroll thumb="h-[57%]" />
      </div>
      <Dialog />
    </section>
  );
}

function StatusBar() {
  const cell = "border border-[#d5d5d5] pl-px leading-[18px]";
  return (
    <footer className={`flex h-[22px] shrink-0 gap-[2px] bg-white pt-[2px] whitespace-nowrap ${SONG}`}>
      <span className={`w-[148px] bg-[#f4f4f4] ${cell}`} />
      <span className={`w-[78px] bg-[#f4f4f4] ${cell}`}>层高:2.15m</span>
      <span className={`w-[98px] bg-[#f4f4f4] ${cell}`}>底标高:-2.2m</span>
      <span className={`w-12 bg-[#f4f4f4] ${cell}`}>0</span>
      <span className={`flex-1 bg-[#f4f4f4] ${cell}`}>名称在当前层当前构件类型下不允许重名</span>
      <span className={`w-[71px] bg-[#f4f4f4] ${cell}`}>69.4 FPS</span>
    </footer>
  );
}

/* ---------- taskbar ---------- */

function EIcon({ body, ring }: { body: string; ring?: string }) {
  return (
    <svg viewBox="0 0 24 24" className="size-6" fill="none" aria-hidden="true">
      <path
        d="M21 14.500H9c.5 5 7 5 11 2.500v4c-8 4.500-17 1-17-8C3 4 9 1.500 13 2c6 .5 8.500 5 8 12.500zM9 10.500h6.500c0-5-6-5-6.500 0z"
        fill={body}
      />
      {ring && <path d="M3 22C-1 17 14 1 22 2c1.500.5 1 3 0 5" stroke={ring} strokeWidth="1.800" />}
    </svg>
  );
}

const apps: { name: string; slot: string; icon: ReactNode }[] = [
  {
    name: "任务视图",
    slot: "w-12",
    icon: (
      <svg viewBox="0 0 20 18" className="h-[18px] w-5" fill="none" stroke="#fff" strokeWidth="1.300" aria-hidden="true">
        <path d="M5 2h10v14H5zM3 4H.7v10H3M17 4h2.300v10H17" />
      </svg>
    ),
  },
  {
    name: "风扇",
    slot: "w-[52px]",
    icon: (
      <svg viewBox="0 0 24 24" className="size-6" fill="#e4e4e4" stroke="#111" strokeWidth=".8" aria-hidden="true">
        <path d="M12 12C6 14 1 11 1.500 6.500 2 1 8 0 10.500 3c2 3 .5 6 1.500 9z" />
        <path d="M12 12c-2-6 1-11 5.500-10.500C23 2 24 8 21 10.500c-3 2-6 .5-9 1.500z" />
        <path d="M12 12c6-2 11 1 10.500 5.500C22 23 16 24 13.500 21c-2-3-.5-6-1.500-9z" />
        <path d="M12 12c2 6-1 11-5.500 10.500C1 22 0 16 3 13.500c3-2 6-.5 9-1.500z" />
      </svg>
    ),
  },
  { name: "浏览器", slot: "w-[52px]", icon: <EIcon body="#f2f2f2" ring="#f2f2f2" /> },
  {
    name: "加速球",
    slot: "w-[52px]",
    icon: (
      <svg viewBox="0 0 28 28" className="size-7" fill="none" aria-hidden="true">
        <path d="M17 8C12 3 3 7 3 15c0 7 7 11 12 8 6-3 5-12-1-13-5-1-8 5-5 8 3 2 6-1 5-4" stroke="#d4d4d4" strokeWidth="1.700" />
        <path d="M15 11.500c2-2 1-8.500 5.500-9C25 3 24 9.500 26 11.500zM19 12h3v2h-3z" fill="#f2b20c" />
      </svg>
    ),
  },
  { name: "Edge", slot: "w-[39px]", icon: <EIcon body="#0a78d6" /> },
  { name: "Internet Explorer", slot: "w-[39px]", icon: <EIcon body="#4cb4f0" ring="#f6c928" /> },
  {
    name: "文件资源管理器",
    slot: "w-[39px]",
    icon: (
      <svg viewBox="0 0 24 24" className="size-6" aria-hidden="true">
        <path d="M1 3h8l2 2h12v15H1z" fill="#f3c64a" />
        <path d="M1 7h22v13H1z" fill="#fde08b" />
        <path d="M5 22v-9h14v9h-4v-5H9v5z" fill="#2f9fe0" />
      </svg>
    ),
  },
  {
    name: "安全浏览器",
    slot: "w-[39px] border-b-2 border-[#76b9ed]",
    icon: (
      <svg viewBox="0 0 24 24" className="size-6" fill="none" aria-hidden="true">
        <circle cx="12" cy="12" r="10.500" fill="#4db83c" />
        <path d="M7 12.500h10c0-7-10-7-10 0 0 6 6.500 6 9.500 3" stroke="#fff" strokeWidth="2.600" />
        <path d="M3 20C1 15 14 3 22 4" stroke="#d4f0a0" strokeWidth="1.400" />
      </svg>
    ),
  },
  {
    name: "广联达",
    slot: "w-[39px] border-b-2 border-[#76b9ed]",
    icon: (
      <svg viewBox="0 0 24 24" className="size-6" fill="none" aria-hidden="true">
        <path d="M21 2.500C18 5.500 14 4 10.500 6 5 9 4 16 8 19.500c4 3 10 1.500 11-2.500.7-3-1.500-5-5-4" stroke="#1c93e4" strokeWidth="4" />
      </svg>
    ),
  },
  {
    name: "便签",
    slot: "w-[39px] border-b-2 border-[#76b9ed]",
    icon: (
      <svg viewBox="0 0 24 24" className="size-6" fill="none" aria-hidden="true">
        <rect x=".5" y=".5" width="23" height="23" rx="2" fill="#f08c1a" />
        <path d="M4 4h15v16H4z" fill="#fff6df" />
        <path d="M6 8h7M6 12h5M6 16h8" stroke="#d6812a" strokeWidth="1.400" />
        <path d="M20 3l3 2-9 13-4 2 1-4z" fill="#f2b134" stroke="#8a4a10" />
      </svg>
    ),
  },
  {
    name: "钢筋算量",
    slot: "w-[39px] border-b-2 border-[#76b9ed] bg-[#31393d]",
    icon: (
      <svg viewBox="0 0 24 24" className="size-6" fill="none" aria-hidden="true">
        <rect width="24" height="24" rx="5" fill="#0a8ff0" />
        <path d="M17 6c-3-2-5-1-5 2v4M4 12h16M20 9v6M4 12c0 8 11 9 11 4" stroke="#fff" strokeWidth="2" />
      </svg>
    ),
  },
];

function Taskbar() {
  return (
    <div className="flex h-10 shrink-0 items-stretch bg-[#020c10] text-white">
      <button type="button" aria-label="开始" className="flex w-12 items-center justify-center bg-black">
        <svg viewBox="0 0 16 16" className="size-4" fill="#fff" aria-hidden="true">
          <path d="M0 2.300l6.800-1v6.300H0zM7.500 1.200L16 0v7.600H7.500zM0 8.400h6.800v6.300L0 13.700zM7.500 8.400H16V16l-8.500-1.200z" />
        </svg>
      </button>
      <div className="flex w-[344px] items-center bg-[#333] pl-[9px]">
        <span className="size-[21px] shrink-0 rounded-full border-[3px] border-white" />
        <input
          aria-label="任务栏搜索"
          placeholder="在这里输入你要搜索的内容"
          className="ml-[6px] min-w-0 flex-1 bg-transparent text-[14px] placeholder:text-[#999]"
        />
        <Mic className="mr-3 size-[17px] text-[#999]" strokeWidth={1.5} />
      </div>
      {apps.map((a) => (
        <button type="button" key={a.name} aria-label={a.name} className={`flex shrink-0 items-center justify-center ${a.slot}`}>
          {a.icon}
        </button>
      ))}
      <div className="ml-[2px] flex w-[17px] flex-col items-center justify-between bg-[#f0f0f0] py-[2px]">
        <ChevronUp className="size-3 text-[#555]" strokeWidth={3} />
        <ChevronDown className="size-3 text-[#555]" strokeWidth={3} />
      </div>
      <span className="ml-[10px] self-center">链接</span>
      <div className="ml-5 flex w-[52px] flex-col justify-center text-center leading-[17px] whitespace-nowrap">
        <span>19%</span>
        <span>CPU使用</span>
      </div>
      <div className="ml-auto flex items-center gap-2">
        <ChevronUp className="size-4" strokeWidth={1.8} />
        <span className="flex size-4 items-center justify-center bg-[#ddd] text-[14px] leading-4 text-[#222]">龍</span>
        <Bell className="size-4 fill-white" />
        <svg viewBox="0 0 18 16" className="h-4 w-[18px]" fill="none" stroke="#fff" strokeWidth="1.300" aria-hidden="true">
          <path d="M6 5h10v7H5M16 7h1.500v3H16M2 2v3m3-3v3M1 5h5v2q-2.500 3-5 0zM3.500 9v5" />
          <path d="M8 7h6v3H8z" fill="#fff" />
        </svg>
        <svg viewBox="0 0 16 16" className="size-4" fill="none" stroke="#fff" strokeWidth="1.200" aria-hidden="true">
          <path d="M2 14C2 8 7 3 14 3M5 14c0-4 4-8 9-8M8 14c0-3 2-5 6-5M11 14c0-1.500 1-2.500 3-2.500" />
          <circle cx="13.500" cy="14" r="1" fill="#fff" />
        </svg>
        <svg viewBox="0 0 18 16" className="h-4 w-[18px]" fill="none" stroke="#fff" strokeWidth="1.200" aria-hidden="true">
          <path d="M1 6h3l3-3v10l-3-3H1zM9.500 6q1.500 2 0 4M12 4q3 4 0 8M14.500 2q4.500 6 0 12" />
        </svg>
        <svg viewBox="0 0 24 14" className="h-[14px] w-6" fill="none" stroke="#fff" aria-hidden="true">
          <rect x=".5" y=".5" width="23" height="12.500" />
          <path d="M3 4h18M3 7h18" strokeDasharray="2 1" strokeWidth="1.500" />
          <path d="M6 10.500h12" strokeWidth="1.500" />
        </svg>
        <span className="text-[14px]">英</span>
      </div>
      <span className="ml-[2px] flex w-9 items-center justify-center bg-[#10191d]">
        <svg viewBox="0 0 16 16" className="size-[17px]" fill="none" aria-hidden="true">
          <path d="M1 2l13-2 2 13-13 3z" fill="#ee4d1b" />
          <path d="M12.500 4.500c-3-1-7.500-.5-7.500 1.800C5 8.500 12 7.500 12 10s-5 2.500-7.500 1" stroke="#fff" strokeWidth="2.200" />
        </svg>
      </span>
      <div className="flex w-[74px] flex-col justify-center text-center leading-[19px]">
        <time>15:20</time>
        <time>2018/8/10</time>
      </div>
      <button type="button" aria-label="1 条新通知" className="relative flex w-[51px] items-center justify-center">
        <svg viewBox="0 0 18 18" className="mr-3 size-[17px]" aria-hidden="true">
          <path d="M1 1h16v13h-5v4l-4-4H1z" fill="#fff" />
          <path d="M4 4.500h10M4 7.500h10M4 10.500h7" stroke="#111" strokeWidth="1.300" />
        </svg>
        <span className="absolute right-[12px] bottom-[5px] flex size-4 items-center justify-center rounded-full border border-[#888] bg-[#2b3337] text-[11px]">
          1
        </span>
      </button>
    </div>
  );
}

export default function App() {
  return (
    <div className={`relative flex h-screen flex-col overflow-hidden bg-[#f0f0f0] text-xs text-black ${UI}`}>
      <TitleBar />
      <MenuBar />
      <MainToolbar />
      <main className="flex min-h-0 flex-1 gap-[6px]">
        <ModuleNav />
        <div className="flex min-w-0 flex-1 flex-col">
          <ComponentToolbar />
          <div className="flex min-h-0 flex-1">
            <MemberList />
            <PropertyPanel />
          </div>
        </div>
      </main>
      <StatusBar />
      <Taskbar />
      <div className="absolute -top-[26px] left-[701px] flex size-11 items-end justify-center rounded-full border-2 border-[#3c9a4c] bg-[#43c35c] pb-[3px] text-[12px] leading-3 font-bold text-white shadow-md">
        73
      </div>
    </div>
  );
}
